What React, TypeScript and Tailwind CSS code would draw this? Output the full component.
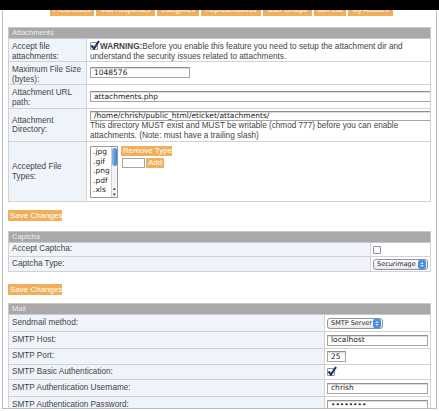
import React from 'react'

const font = { fontFamily: '"Liberation Sans", Arial, sans-serif' }

function Checkbox({ checked, inline }: { checked?: boolean; inline?: boolean }) {
  return (
    <span className={`relative inline-block w-[8px] h-[8px] border border-[#8a93a3] rounded-[1px] bg-white shrink-0 ${inline ? 'align-[-1px] mr-[2px]' : ''}`}>
      {checked && (
        <svg viewBox="0 0 10 10" className="absolute -left-[1px] -top-[3px] w-[10px] h-[10px]">
          <path d="M1.5 5.5 L4 8.5 L9 1" fill="none" stroke="#1f3766" strokeWidth="2.2" />
        </svg>
      )}
    </span>
  )
}

function Select({ label, width }: { label: string; width: string }) {
  return (
    <span className={`inline-flex items-center justify-between h-[11px] rounded-[3px] border border-[#8c94a3] bg-gradient-to-b from-white to-[#e9e9e9] pl-[3px] ${width}`}>
      <span className="text-[6.5px] leading-none text-[#222] font-['DejaVu_Sans']">{label}</span>
      <span className="flex h-[9px] w-[8px] flex-col items-center justify-center rounded-[2px] bg-[#4a8ee6] mr-[1px]">
        <svg viewBox="0 0 6 8" className="w-[4px] h-[7px]"><path d="M3 0.5 L5.5 3 H0.5Z M3 7.5 L5.5 5 H0.5Z" fill="white" /></svg>
      </span>
    </span>
  )
}

function Input({ value, width, h = 'h-[11px]' }: { value: string; width: string; h?: string }) {
  return (
    <div className={`${h} border border-[#a5a5a5] border-t-[#8f8f8f] bg-white shadow-[inset_0_1px_1px_rgba(0,0,0,0.15)] flex items-center px-[3px] ${width}`}>
      <span className="text-[7.5px] leading-none text-[#222] font-['DejaVu_Sans'] whitespace-nowrap">{value}</span>
    </div>
  )
}

function Button({ children, className = '' }: { children: React.ReactNode; className?: string }) {
  return (
    <span className={`inline-flex items-center h-[10px] px-[2px] bg-[#f0af5a] text-white text-[8px] leading-none whitespace-nowrap ${className}`}>
      {children}
    </span>
  )
}

function Header({ title }: { title: string }) {
  return (
    <div className="h-[12px] bg-[#a9a9a9] border border-[#c9c9c9] flex items-center px-[3px] text-[7.5px] text-[#ececec]">
      {title}
    </div>
  )
}

function Row({ label, h, children, center }: { label: React.ReactNode; h: string; children?: React.ReactNode; center?: boolean }) {
  return (
    <div className={`flex border-b border-x border-[#d2d2d2] overflow-hidden ${h}`}>
      <div className={`w-[78px] shrink-0 bg-[#eef4fa] border-r border-[#d2d2d2] px-[3px] text-[8.2px] leading-[9.5px] text-[#444] flex ${center ? 'items-center' : 'items-start pt-[3px]'}`}>
        <span>{label}</span>
      </div>
      <div className="flex-1 bg-white px-[3px] py-[2px] text-[8.2px] leading-[9.5px] text-[#444] min-w-0">{children}</div>
    </div>
  )
}

function SlimRow({ label, h, children }: { label: string; h: string; children?: React.ReactNode }) {
  return (
    <div className={`flex border-b border-x border-[#d2d2d2] ${h}`}>
      <div className="flex-1 bg-[#eef4fa] border-r border-[#d2d2d2] px-[3px] text-[8.2px] text-[#444] flex items-center">{label}</div>
      <div className="shrink-0 bg-white px-[2px] flex items-center w-[var(--vw)]">{children}</div>
    </div>
  )
}

export default function App() {
  const tabs = [
    ['Preferences', 'w-[44px]'],
    ['Mail Responses', 'w-[59px]'],
    ['Categories', 'w-[42px]'],
    ['Representatives', 'w-[60px]'],
    ['User Groups', 'w-[49px]'],
    ['Ban List', 'w-[32px]'],
    ['My Account', 'w-[45px]'],
  ]
  return (
    <div className="w-[439px] h-[411px] overflow-hidden bg-white" style={font}>
      <div className="h-[10px] bg-black" />
      <div className="mx-[2px] h-[399px] border-x border-b border-[#bdbdbd] bg-white overflow-hidden">
        {/* tabs cut off by the black bar */}
        <div className="h-[6px] overflow-hidden flex items-end gap-[2px] pl-[47px]">
          {tabs.map(([t, w]) => (
            <span key={t} className={`${w} h-[12px] shrink-0 bg-[#f0af5a] text-white text-[7px] leading-none pt-[2px] flex justify-center whitespace-nowrap overflow-hidden`}>{t}</span>
          ))}
        </div>

        <div className="px-[5px] pt-[11px]">
          {/* Attachments */}
          <Header title="Attachments" />
          <Row label={<>Accept file<br />attachments:</>} h="h-[23px]">
            <div className="pt-[1px]">
              <Checkbox checked inline />
              <b className="font-bold">WARNING:</b>Before you enable this feature you need to setup the attachment dir and understand the security issues related to attachments.
            </div>
          </Row>
          <Row label={<>Maximum File Size<br />(bytes):</>} h="h-[23px]">
            <div className="pt-[3px]"><Input value="1048576" width="w-[100px]" /></div>
          </Row>
          <Row label={<>Attachment URL<br />path:</>} h="h-[24px]">
            <div className="pt-[4px]"><Input value="attachments.php" width="w-[341px]" /></div>
          </Row>
          <Row label={<>Attachment<br />Directory:</>} h="h-[33px]" center>
            <Input value="/home/chrish/public_html/eticket/attachments/" width="w-[341px]" h="h-[10px]" />
            <div>This directory MUST exist and MUST be writable (chmod 777) before you can enable attachments. (Note: must have a trailing slash)</div>
          </Row>
          <Row label={<>Accepted File<br />Types:</>} h="h-[60px]" center>
            <div className="flex gap-[3px] pt-[2px]">
              <div className="w-[28px] h-[52px] border border-[#9a9a9a] bg-white flex">
                <div className="flex-1 pl-[2px] text-[7.5px] leading-[9.6px] text-[#222] font-['DejaVu_Sans']">
                  <div>.jpg</div><div>.gif</div><div>.png</div><div>.pdf</div><div>.xls</div>
                </div>
                <div className="w-[6px] border-l border-[#cfcfcf] bg-[#f3f3f3] flex flex-col items-center">
                  <div className="mt-[1px] w-[5px] h-[18px] rounded-full bg-gradient-to-r from-[#8bb5ec] to-[#3d7fd8]" />
                  <div className="flex-1" />
                  <span className="text-[5px] leading-[6px] text-[#333]">▴</span>
                  <span className="text-[5px] leading-[6px] text-[#333]">▾</span>
                </div>
              </div>
              <div className="flex flex-col gap-[2px]">
                <Button className="w-[51px]">Remove Type</Button>
                <div className="flex items-center gap-[1px] pl-[1px]">
                  <div className="w-[23px] h-[10px] border border-[#a5a5a5] bg-white" />
                  <Button>Add</Button>
                </div>
              </div>
            </div>
          </Row>

          <div className="flex pt-[8px] pb-[10px]"><Button className="h-[11px] w-[54px]">Save Changes</Button></div>

          {/* Captcha */}
          <div style={{ ['--vw' as string]: '59px' }}>
            <Header title="Captcha" />
            <SlimRow label="Accept Captcha:" h="h-[14px]"><Checkbox /></SlimRow>
            <SlimRow label="Captcha Type:" h="h-[15px]"><Select label="Securimage" width="w-[55px]" /></SlimRow>
          </div>

          <div className="flex pt-[12px] pb-[8px]"><Button className="h-[11px] w-[54px]">Save Changes</Button></div>

          {/* Mail */}
          <div style={{ ['--vw' as string]: '105px' }}>
            <Header title="Mail" />
            <SlimRow label="Sendmail method:" h="h-[17px]"><Select label="SMTP Server" width="w-[56px]" /></SlimRow>
            <SlimRow label="SMTP Host:" h="h-[17px]"><Input value="localhost" width="w-[101px]" /></SlimRow>
            <SlimRow label="SMTP Port:" h="h-[16px]"><Input value="25" width="w-[19px]" /></SlimRow>
            <SlimRow label="SMTP Basic Authentication:" h="h-[15px]"><Checkbox checked /></SlimRow>
            <SlimRow label="SMTP Authentication Username:" h="h-[17px]"><Input value="chrish" width="w-[101px]" /></SlimRow>
            <SlimRow label="SMTP Authentication Password:" h="h-[17px]"><Input value="••••••••" width="w-[101px]" /></SlimRow>
          </div>
        </div>
      </div>
    </div>
  )
}
